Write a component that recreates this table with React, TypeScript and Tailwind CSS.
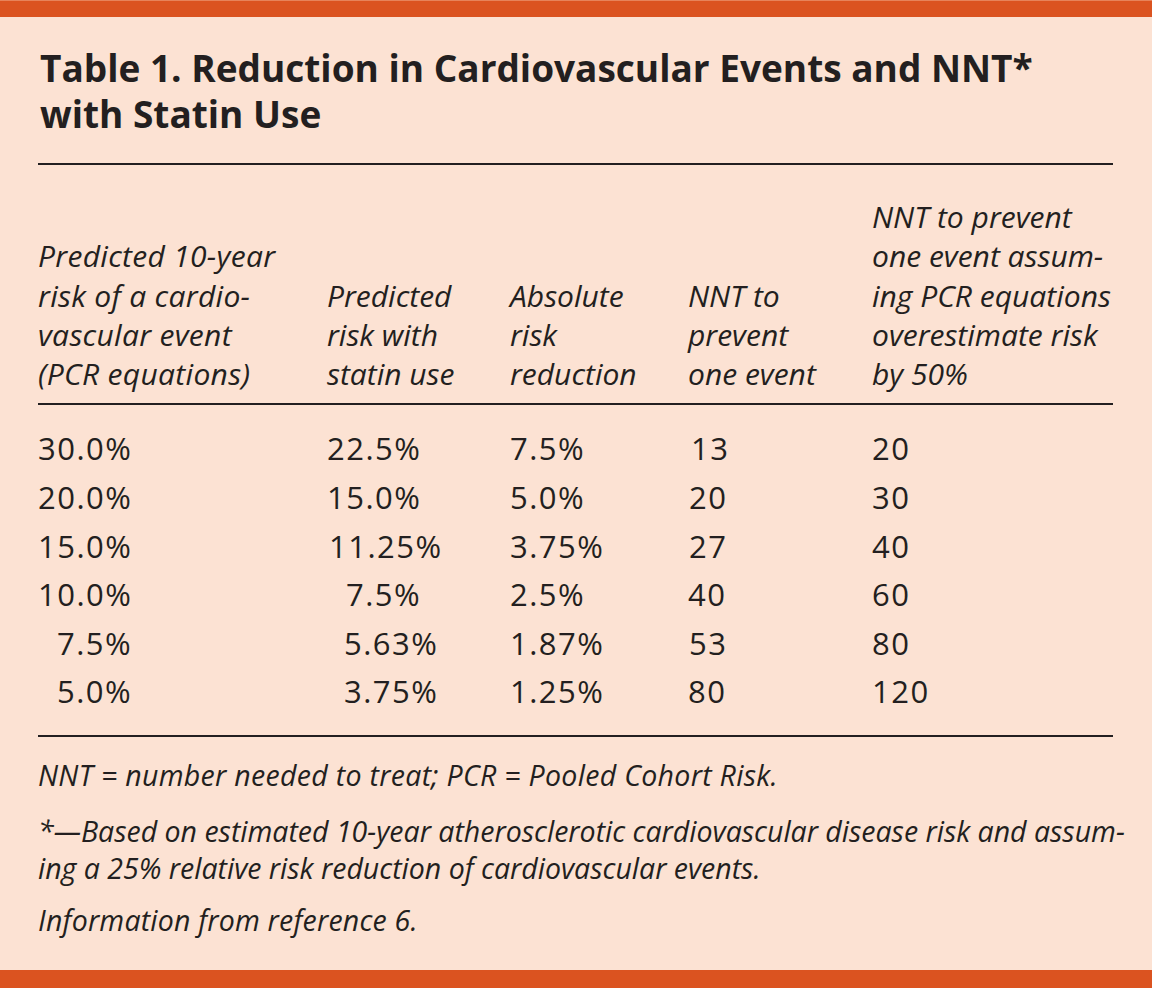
import React from "react";

const rows: { v: string[]; pl: string[] }[] = [
  { v: ["30.0%", "22.5%", "7.5%", "13", "20"], pl: ["pl-[0px]", "pl-[0px]", "pl-[0px]", "pl-[3px]", "pl-[0px]"] },
  { v: ["20.0%", "15.0%", "5.0%", "20", "30"], pl: ["pl-[0px]", "pl-[0px]", "pl-[0px]", "pl-[1px]", "pl-[0px]"] },
  { v: ["15.0%", "11.25%", "3.75%", "27", "40"], pl: ["pl-[0px]", "pl-[2px]", "pl-[0px]", "pl-[1px]", "pl-[0px]"] },
  { v: ["10.0%", "7.5%", "2.5%", "40", "60"], pl: ["pl-[0px]", "pl-[19px]", "pl-[0px]", "pl-[0px]", "pl-[0px]"] },
  { v: ["7.5%", "5.63%", "1.87%", "53", "80"], pl: ["pl-[19px]", "pl-[17px]", "pl-[0px]", "pl-[1px]", "pl-[0px]"] },
  { v: ["5.0%", "3.75%", "1.25%", "80", "120"], pl: ["pl-[19px]", "pl-[17px]", "pl-[0px]", "pl-[0px]", "pl-[0px]"] },
];

export default function App() {
  return (
    <div className="w-[1152px] h-[988px] bg-[#fce2d3] flex flex-col font-['Open_Sans',sans-serif] text-[#231f20]">
      <div className="h-[17px] bg-[#db5320] border-t border-[#e7835a]" />
      <div className="flex-1 flex flex-col pl-[38px] pr-[39px]">
        <h1 className="mt-[28px] pl-[2px] text-[37px] font-bold leading-[46px]">
          Table 1. Reduction in Cardiovascular Events and NNT*
          <br />
          with Statin Use
        </h1>
        <div className="mt-[26px] h-[2px] bg-[#231f20]" />
        <div className="mt-[32px] pb-[10px] grid grid-cols-[289px_183px_178px_184px_241px] items-end italic text-[30px] leading-[39.3px]">
          <div className="tracking-[0.3px]">
            Predicted 10-year
            <br />
            risk of a cardio-
            <br />
            vascular event
            <br />
            (PCR equations)
          </div>
          <div>
            Predicted
            <br />
            risk with
            <br />
            statin use
          </div>
          <div>
            Absolute
            <br />
            risk
            <br />
            reduction
          </div>
          <div>
            NNT to
            <br />
            prevent
            <br />
            one event
          </div>
          <div className="whitespace-nowrap">
            NNT to prevent
            <br />
            one event assum-
            <br />
            ing PCR equations
            <br />
            overestimate risk
            <br />
            by 50%
          </div>
        </div>
        <div className="h-[2px] bg-[#231f20]" />
        <div className="pt-[19px] pb-[19px] grid grid-cols-[289px_183px_178px_184px_241px] text-[31px] tracking-[1.5px] leading-[48.6px]">
          {rows.map((r, i) => (
            <React.Fragment key={i}>
              {r.v.map((c, j) => (
                <div key={j} className={r.pl[j]}>
                  {c}
                </div>
              ))}
            </React.Fragment>
          ))}
        </div>
        <div className="h-[2px] bg-[#231f20]" />
        <div className="italic text-[28.5px] leading-[37px]">
          <p className="mt-[20px] tracking-[0.3px]">NNT = number needed to treat; PCR = Pooled Cohort Risk.</p>
          <p className="mt-[19px] whitespace-nowrap">
            *—Based on estimated 10-year atherosclerotic cardiovascular disease risk and assum-
            <br />
            ing a 25% relative risk reduction of cardiovascular events.
          </p>
          <p className="mt-[15px] tracking-[0.2px]">Information from reference 6.</p>
        </div>
      </div>
      <div className="h-[18px] bg-[#db5320]" />
    </div>
  );
}
